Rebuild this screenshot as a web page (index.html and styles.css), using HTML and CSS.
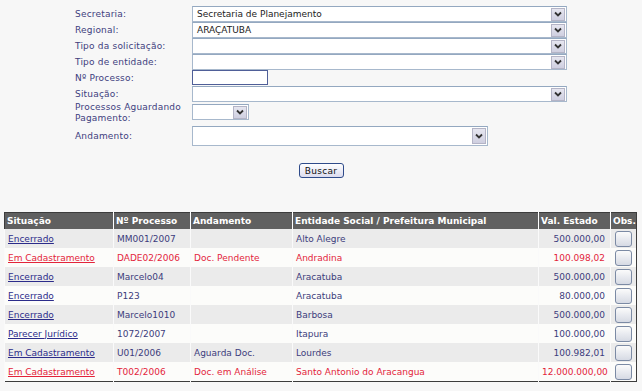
FILE: index.html
```html
<!DOCTYPE html>
<html lang="pt-BR">
<head>
    <meta charset="UTF-8">
    <link rel="stylesheet" href="styles.css">
    <title>Consulta de Processos</title>
</head>
<body>
    <div id="filters">
        <label class="lbl">Secretaria:</label>
        <div class="select wide"><span>Secretaria de Planejamento</span><i class="arrow"><svg width="8" height="6" viewBox="0 0 8 6"><path d="M1 1.5 L4 4.5 L7 1.5" fill="none" stroke="#333" stroke-width="1.8"/></svg></i></div>

        <label class="lbl">Regional:</label>
        <div class="select wide"><span>ARAÇATUBA</span><i class="arrow"><svg width="8" height="6" viewBox="0 0 8 6"><path d="M1 1.5 L4 4.5 L7 1.5" fill="none" stroke="#333" stroke-width="1.8"/></svg></i></div>

        <label class="lbl">Tipo da solicitação:</label>
        <div class="select wide"><span></span><i class="arrow"><svg width="8" height="6" viewBox="0 0 8 6"><path d="M1 1.5 L4 4.5 L7 1.5" fill="none" stroke="#333" stroke-width="1.8"/></svg></i></div>

        <label class="lbl">Tipo de entidade:</label>
        <div class="select wide"><span></span><i class="arrow"><svg width="8" height="6" viewBox="0 0 8 6"><path d="M1 1.5 L4 4.5 L7 1.5" fill="none" stroke="#333" stroke-width="1.8"/></svg></i></div>

        <label class="lbl">Nº Processo:</label>
        <div class="cell"><input type="text" id="num-processo"></div>

        <label class="lbl">Situação:</label>
        <div class="select wide"><span></span><i class="arrow"><svg width="8" height="6" viewBox="0 0 8 6"><path d="M1 1.5 L4 4.5 L7 1.5" fill="none" stroke="#333" stroke-width="1.8"/></svg></i></div>

        <label class="lbl two-lines">Processos Aguardando Pagamento:</label>
        <div class="cell small-cell"><div class="select small"><span></span><i class="arrow"><svg width="8" height="6" viewBox="0 0 8 6"><path d="M1 1.5 L4 4.5 L7 1.5" fill="none" stroke="#333" stroke-width="1.8"/></svg></i></div></div>

        <label class="lbl andamento">Andamento:</label>
        <div class="cell tall-cell"><div class="select tall"><span></span><i class="arrow"><svg width="8" height="6" viewBox="0 0 8 6"><path d="M1 1.5 L4 4.5 L7 1.5" fill="none" stroke="#333" stroke-width="1.8"/></svg></i></div></div>
    </div>

    <div id="search-row">
        <button id="buscar">Buscar</button>
    </div>

    <table id="results">
        <colgroup>
            <col style="width:109px">
            <col style="width:77px">
            <col style="width:102px">
            <col style="width:246px">
            <col style="width:72px">
            <col style="width:26px">
        </colgroup>
        <thead>
            <tr>
                <th>Situação</th>
                <th>Nº Processo</th>
                <th>Andamento</th>
                <th>Entidade Social / Prefeitura Municipal</th>
                <th>Val. Estado</th>
                <th>Obs.</th>
            </tr>
        </thead>
        <tbody>
            <tr>
                <td><a href="#">Encerrado</a></td>
                <td>MM001/2007</td>
                <td></td>
                <td>Alto Alegre</td>
                <td class="money">500.000,00</td>
                <td class="obs"><button class="obs-btn"></button></td>
            </tr>
            <tr class="late">
                <td><a href="#">Em Cadastramento</a></td>
                <td>DADE02/2006</td>
                <td>Doc. Pendente</td>
                <td>Andradina</td>
                <td class="money">100.098,02</td>
                <td class="obs"><button class="obs-btn"></button></td>
            </tr>
            <tr>
                <td><a href="#">Encerrado</a></td>
                <td>Marcelo04</td>
                <td></td>
                <td>Aracatuba</td>
                <td class="money">500.000,00</td>
                <td class="obs"><button class="obs-btn"></button></td>
            </tr>
            <tr>
                <td><a href="#">Encerrado</a></td>
                <td>P123</td>
                <td></td>
                <td>Aracatuba</td>
                <td class="money">80.000,00</td>
                <td class="obs"><button class="obs-btn"></button></td>
            </tr>
            <tr>
                <td><a href="#">Encerrado</a></td>
                <td>Marcelo1010</td>
                <td></td>
                <td>Barbosa</td>
                <td class="money">500.000,00</td>
                <td class="obs"><button class="obs-btn"></button></td>
            </tr>
            <tr>
                <td><a href="#">Parecer Jurídico</a></td>
                <td>1072/2007</td>
                <td></td>
                <td>Itapura</td>
                <td class="money">100.000,00</td>
                <td class="obs"><button class="obs-btn"></button></td>
            </tr>
            <tr>
                <td><a href="#">Em Cadastramento</a></td>
                <td>U01/2006</td>
                <td>Aguarda Doc.</td>
                <td>Lourdes</td>
                <td class="money">100.982,01</td>
                <td class="obs"><button class="obs-btn"></button></td>
            </tr>
            <tr class="late">
                <td><a href="#">Em Cadastramento</a></td>
                <td>T002/2006</td>
                <td>Doc. em Análise</td>
                <td>Santo Antonio do Aracangua</td>
                <td class="money">12.000.000,00</td>
                <td class="obs"><button class="obs-btn"></button></td>
            </tr>
        </tbody>
    </table>
</body>
</html>
```

FILE: styles.css
```css
body {
    margin: 0;
    background-color: #f7f7f7;
    font-family: "DejaVu Sans", Verdana, sans-serif;
    font-size: 9px;
    color: #3a3a7a;
}

#filters {
    display: grid;
    grid-template-columns: 117px 375px;
    margin-left: 75px;
    padding-top: 6px;
}

.lbl {
    color: #40407e;
    height: 16px;
    line-height: 16px;
    letter-spacing: 0.2px;
}

.lbl.two-lines {
    box-sizing: border-box;
    height: 20px;
    line-height: 11px;
    padding-top: 0;
}

.lbl.andamento {
    margin-top: 4px;
    height: 20px;
    line-height: 20px;
}

.cell {
    height: 16px;
}

.small-cell {
    height: 20px;
}

.tall-cell {
    height: 24px;
}

.select {
    box-sizing: border-box;
    height: 16px;
    display: flex;
    align-items: center;
    justify-content: space-between;
    background-color: #fff;
    border: 1px solid #a7b8cc;
    border-top-color: #94a8c0;
    color: #222;
    padding-left: 4px;
    padding-right: 1px;
}

.select span {
    white-space: nowrap;
}

.arrow {
    box-sizing: border-box;
    width: 14px;
    height: 13px;
    display: flex;
    align-items: center;
    justify-content: center;
    background: linear-gradient(#e6e6f0, #cfcfe0);
    border: 1px solid #b4b4c6;
}

.select.small {
    width: 57px;
    margin-top: 2px;
}

.select.tall {
    width: 296px;
    height: 20px;
    margin-top: 4px;
}

.select.tall .arrow {
    height: 16px;
}

#num-processo {
    box-sizing: border-box;
    display: block;
    width: 76px;
    height: 15px;
    margin: 0;
    padding: 0;
    border: 1px solid #4f5f98;
    background-color: #fff;
}

#search-row {
    display: flex;
    justify-content: center;
    margin-top: 17px;
}

#buscar {
    box-sizing: border-box;
    width: 45px;
    height: 15px;
    padding: 0;
    font-family: "DejaVu Sans", Verdana, sans-serif;
    font-size: 9px;
    color: #111;
    letter-spacing: 0.3px;
    border: 1px solid #2f4b8a;
    border-radius: 3px;
    background: linear-gradient(#ffffff, #dcdcee);
}

#results {
    margin: 34px 0 0 4px;
    width: 633px;
    table-layout: fixed;
    border-collapse: collapse;
    border: 1px solid #3c3c3c;
}

#results th {
    height: 16px;
    padding: 0 2px;
    background-color: #606060;
    color: #fff;
    font-weight: bold;
    text-align: left;
    border-left: 1px solid #fff;
    white-space: nowrap;
    overflow: hidden;
}

#results th:first-child {
    border-left: none;
}

#results td {
    height: 19px;
    padding: 0 2px 0 3px;
    border-left: 1px solid #fafafa;
    white-space: nowrap;
    overflow: hidden;
    color: #3c3c7c;
}

#results tbody tr:nth-child(odd) td {
    background-color: #ebebeb;
}

#results tbody tr:nth-child(even) td {
    background-color: #fcfcfa;
}

#results a {
    color: #2b2b8a;
}

#results tr.late td,
#results tr.late a {
    color: #e3243a;
}

#results td.money {
    text-align: right;
    padding-right: 5px;
}

#results td.obs {
    padding: 0 0 0 4px;
}

.obs-btn {
    display: block;
    width: 17px;
    height: 16px;
    padding: 0;
    border: 1px solid #7b8aa4;
    border-radius: 3px;
    background: linear-gradient(#fbfbfb, #d6dae4);
}
```
